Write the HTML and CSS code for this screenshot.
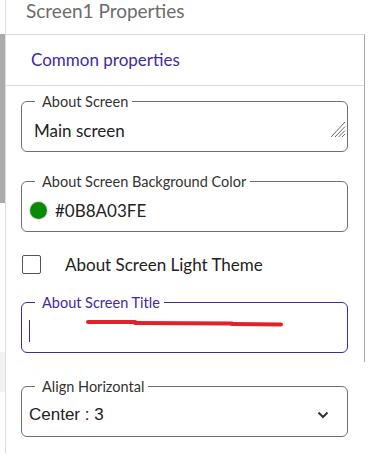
FILE: index.html
```html
<!DOCTYPE html>
<html lang="en">
<head>
    <meta charset="UTF-8">
    <meta name="viewport" content="width=device-width, initial-scale=1.0">
    <title>Screen1 Properties</title>
    <link rel="stylesheet" href="styles.css">
</head>
<body>
    <div class="frame">
        <div class="rail">
            <div class="rail-thumb"></div>
            <div class="rail-mark"></div>
        </div>

        <div class="panel">
            <h1 class="panel-title">Screen1 Properties</h1>

            <section class="group">
                <h2 class="group-title">Common properties</h2>

                <div class="group-body">
                    <fieldset class="field">
                        <legend>About Screen</legend>
                        <div class="field-value">
                            Main screen
                            <svg class="grip" width="17" height="18" viewBox="0 0 17 18">
                                <path d="M2 17 L16 2 M6 17 L16 6.5 M9.5 17 L16 10.5 M13 17 L16 14" stroke="#666" stroke-width="1" fill="none"/>
                            </svg>
                        </div>
                    </fieldset>

                    <fieldset class="field">
                        <legend>About Screen Background Color</legend>
                        <div class="field-value">
                            <span class="swatch"></span>
                            #0B8A03FE
                        </div>
                    </fieldset>

                    <label class="check-row">
                        <span class="check-box"></span>
                        About Screen Light Theme
                    </label>

                    <fieldset class="field field-focus">
                        <legend>About Screen Title</legend>
                        <div class="field-value">
                            <span class="caret"></span>
                            <svg class="scribble" width="300" height="42" viewBox="0 0 300 42">
                                <path d="M54 12 L101 12" stroke="#e4202a" stroke-width="4" stroke-linecap="round" fill="none"/>
                                <path d="M101 13 L198 13.5" stroke="#e4202a" stroke-width="4" stroke-linecap="round" fill="none"/>
                                <path d="M198 14 L247 14.5" stroke="#e4202a" stroke-width="4" stroke-linecap="round" fill="none"/>
                            </svg>
                        </div>
                    </fieldset>
                </div>
            </section>

            <fieldset class="field field-select">
                <legend>Align Horizontal</legend>
                <div class="field-value select-value">
                    Center : 3
                    <svg class="chevron" width="12" height="8" viewBox="0 0 12 8">
                        <path d="M1.5 1.5 L6 6 L10.5 1.5" stroke="#333" stroke-width="2" fill="none"/>
                    </svg>
                </div>
            </fieldset>
        </div>
    </div>
</body>
</html>
```

FILE: styles.css
```css
body {
    margin: 0;
    background: white;
    font-family: Lato, "Noto Sans", sans-serif;
}

.frame {
    display: flex;
    height: 453px;
}

.rail {
    width: 5px;
    flex-shrink: 0;
}

.rail-thumb {
    margin-top: 34px;
    height: 169px;
    background-color: #ababab;
}

.rail-mark {
    margin-top: 149px;
    height: 40px;
    background-color: #f2f2f2;
}

.panel {
    border-left: 1px solid #dedede;
    width: 375px;
}

.panel-title {
    margin: 0;
    height: 34px;
    padding: 2px 0 0 20px;
    font-size: 19px;
    font-weight: normal;
    line-height: 18px;
    color: #6c6c6c;
    box-sizing: border-box;
}

.group {
    width: 359px;
    height: 328px;
    border-top: 1px solid #dcdcdc;
    border-right: 1px solid #a9a9a9;
    box-sizing: border-box;
}

.group-title {
    margin: 0;
    height: 51px;
    padding-left: 25px;
    border-bottom: 1px solid #dcdcdc;
    font-size: 17px;
    font-weight: normal;
    line-height: 50px;
    color: #3f2aa3;
    box-sizing: border-box;
}

.group-body {
    padding: 8px 16px 0 15px;
}

.field {
    margin: 0 0 22px 0;
    padding: 0 12px;
    min-width: 0;
    border: 1px solid #707070;
    border-radius: 6px;
}

.field legend {
    margin-left: 1px;
    padding: 0 4px 0 7px;
    font-size: 14.5px;
    line-height: 15px;
    color: #333;
}

.field-value {
    position: relative;
    display: flex;
    align-items: center;
    height: 42px;
    font-size: 17px;
    color: #222;
}

.grip {
    margin-left: auto;
    margin-right: -11px;
    margin-top: -2px;
}

.swatch {
    width: 17px;
    height: 17px;
    margin: 0 8px 0 -4px;
    border-radius: 50%;
    background-color: #0b8a03;
    box-shadow: 0 0 0 1px #ddd;
}

.check-row {
    display: flex;
    align-items: center;
    height: 20px;
    margin: 3px 0 21px 0;
    font-size: 17px;
    color: #222;
}

.check-box {
    width: 17px;
    height: 17px;
    margin: 0 24px 0 1px;
    border: 1.5px solid #555;
    border-radius: 2px;
}

.field-focus {
    margin-bottom: 0;
    border: 1.5px solid #4527a0;
}

.field-focus legend {
    color: #4527a0;
}

.caret {
    width: 1px;
    height: 22px;
    margin-left: -5px;
    background-color: #3a2c8c;
}

.scribble {
    position: absolute;
    left: 0;
    top: 0;
}

.field-select {
    width: 327px;
    margin: 17px 0 0 15px;
    padding: 0 12px 0 7px;
    box-sizing: border-box;
}

.field-select legend {
    margin-left: 6px;
}

.select-value {
    font-family: "Liberation Sans", Arial, sans-serif;
    font-size: 17px;
    color: #222;
}

.chevron {
    margin-left: auto;
    margin-right: 6px;
}
```
